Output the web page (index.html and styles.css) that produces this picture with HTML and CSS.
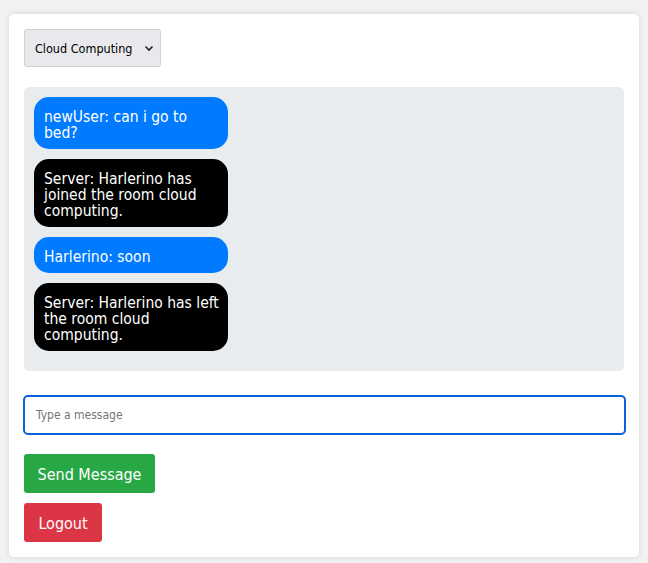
FILE: index.html
```html
<!DOCTYPE html>
<html>
<head>
<meta charset="utf-8">
<link rel="stylesheet" href="styles.css">
</head>
<body>
<div class="card">
  <div class="room-row">
    <div class="select">
      <span class="select-label">Cloud Computing</span>
      <svg class="chev" width="10" height="7" viewBox="0 0 10 7"><path d="M1.5 1.5 L5 5 L8.5 1.5" fill="none" stroke="#222" stroke-width="1.6"/></svg>
    </div>
  </div>
  <div class="chat">
    <div class="msg user">newUser: can i go to bed?</div>
    <div class="msg server">Server: Harlerino has joined the room cloud computing.</div>
    <div class="msg user">Harlerino: soon</div>
    <div class="msg server">Server: Harlerino has left the room cloud computing.</div>
  </div>
  <div class="input-row">
    <div class="input"><span class="placeholder">Type a message</span></div>
  </div>
  <div class="btn send">Send Message</div>
  <div class="btn logout">Logout</div>
</div>
</body>
</html>
```
FILE: styles.css
```css
html, body {
  margin: 0;
  padding: 0;
}
body {
  background: #f2f2f2;
  font-family: "DejaVu Sans Condensed", "DejaVu Sans", sans-serif;
  padding: 14px 9px 6px 9px;
  width: 648px;
  height: 563px;
  box-sizing: border-box;
}
.card {
  background: #fff;
  border-radius: 5px;
  box-shadow: 0 0 6px rgba(0,0,0,0.12);
  padding: 15px 15px 15px 15px;
  width: 630px;
  box-sizing: border-box;
}
.room-row {
  display: flex;
  margin-bottom: 20px;
}
.select {
  display: flex;
  align-items: center;
  justify-content: space-between;
  width: 137px;
  height: 38px;
  box-sizing: border-box;
  background: #e9e9ed;
  border: 1px solid #cfcfd4;
  border-radius: 3px;
  padding: 0 6px 0 10px;
  font-family: "DejaVu Sans Condensed", sans-serif;
  font-size: 12.5px;
  color: #000;
}
.chat {
  background: #e9ecef;
  border-radius: 5px;
  padding: 10px 10px 20px 10px;
  width: 600px;
  box-sizing: border-box;
  display: flex;
  flex-direction: column;
  gap: 10px;
}
.msg {
  width: 194px;
  box-sizing: border-box;
  padding: 12px 4px 8px 10px;
  border-radius: 15px;
  color: #fff;
  font-size: 15.5px;
  line-height: 16px;
}
.user { background: #007bff; }
.server { background: #000; }
.input-row {
  margin-top: 24px;
  margin-left: -1px;
}
.input {
  width: 603px;
  height: 40px;
  box-sizing: border-box;
  border: 2px solid #0a62dc;
  border-radius: 5px;
  display: flex;
  align-items: center;
  padding-left: 11px;
}
.placeholder {
  font-size: 12px;
  color: #757575;
}
.btn {
  display: flex;
  align-items: center;
  justify-content: center;
  height: 39px;
  padding-top: 1px;
  border-radius: 3px;
  color: #fff;
  font-size: 16px;
  white-space: nowrap;
  box-sizing: border-box;
}
.send {
  background: #28a745;
  margin-top: 19px;
  width: 131px;
}
.logout {
  background: #dc3545;
  margin-top: 10px;
  width: 78px;
}
```
